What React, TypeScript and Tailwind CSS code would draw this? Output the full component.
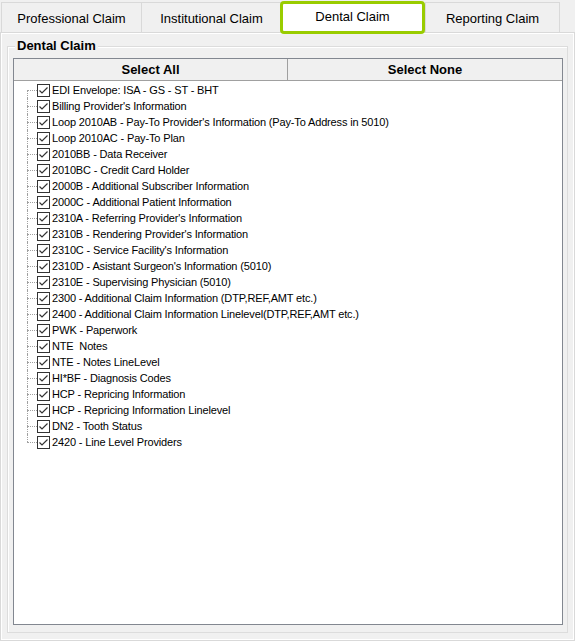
import React from 'react';

const tabs = [
  { label: 'Professional Claim', width: 'w-[140px]' },
  { label: 'Institutional Claim', width: 'w-[140px]' },
  { label: 'Dental Claim', width: 'w-[145px]', active: true },
  { label: 'Reporting Claim', width: 'w-[135px]' },
];

const items = [
  'EDI Envelope: ISA - GS - ST - BHT',
  "Billing Provider's Information",
  "Loop 2010AB - Pay-To Provider's Information (Pay-To Address in 5010)",
  'Loop 2010AC - Pay-To Plan',
  '2010BB - Data Receiver',
  '2010BC - Credit Card Holder',
  '2000B - Additional Subscriber Information',
  '2000C - Additional Patient Information',
  "2310A - Referring Provider's Information",
  "2310B - Rendering Provider's Information",
  "2310C - Service Facility's Information",
  "2310D - Asistant Surgeon's Information (5010)",
  '2310E - Supervising Physician (5010)',
  '2300 - Additional Claim Information (DTP,REF,AMT etc.)',
  '2400 - Additional Claim Information Linelevel(DTP,REF,AMT etc.)',
  'PWK - Paperwork',
  'NTE  Notes',
  'NTE - Notes LineLevel',
  'HI*BF - Diagnosis Codes',
  'HCP - Repricing Information',
  'HCP - Repricing Information Linelevel',
  'DN2 - Tooth Status',
  '2420 - Line Level Providers',
];

function CheckBox() {
  return (
    <svg width="13" height="13" viewBox="0 0 13 13" className="shrink-0">
      <rect x="0.5" y="0.5" width="12" height="12" fill="#fff" stroke="#333" />
      <path d="M2.5 6.5 L5 9 L10.5 3.5" fill="none" stroke="#333" strokeWidth="1.2" />
    </svg>
  );
}

function TreeRow({ text, first, last }: { text: string; first: boolean; last: boolean }) {
  return (
    <div className="flex h-[16px] items-center">
      {/* connector lines */}
      <div className="relative w-[10px] self-stretch">
        <div
          className={`absolute left-0 border-l border-dotted border-[#a0a0a0] ${
            first ? 'top-[8px] bottom-0' : last ? 'top-0 h-[8px]' : 'top-0 bottom-0'
          }`}
        />
        <div className="absolute left-0 top-[8px] w-full border-t border-dotted border-[#a0a0a0]" />
      </div>
      <CheckBox />
      <span className="ml-[2px] whitespace-pre text-[11px] leading-none tracking-[-0.15px] text-black">
        {text}
      </span>
    </div>
  );
}

export default function App() {
  return (
    <div className="h-[641px] w-[575px] overflow-hidden bg-[#f0f0f0] font-['Liberation_Sans',Arial,sans-serif] text-black">
      {/* Tabs */}
      <div className="flex h-[32px] items-end pl-[1px]">
        {tabs.map((t) =>
          t.active ? (
            <div
              key={t.label}
              className={`relative z-10 -mb-[2px] -ml-[1px] flex h-[33px] ${t.width} items-start justify-center rounded-[4px] border-[3px] border-[#99cc00] bg-white pt-[3px] text-[13px]`}
            >
              {t.label}
            </div>
          ) : (
            <div
              key={t.label}
              className={`flex h-[30px] ${t.width} items-center justify-center border-l border-t border-[#d9d9d9] bg-[#f0f0f0] pt-[2px] text-[13px] last:border-r`}
            >
              {t.label}
            </div>
          )
        )}
      </div>

      {/* Panel */}
      <div className="h-[609px] w-[575px] border border-[#d9d9d9] bg-[#f0f0f0] pl-[6px] pt-[13px] shadow-[inset_1px_1px_0_#fff,inset_-1px_-1px_0_#fff]">
        {/* Group box */}
        <div className="relative h-[587px] w-[561px] border border-[#dcdcdc] shadow-[inset_1px_1px_0_#fff]">
          <span className="absolute -top-[9px] left-[7px] bg-[#f0f0f0] px-[2px] text-[13px] font-bold leading-[16px]">
            Dental Claim
          </span>
          <div className="ml-[5px] mt-[11px] flex h-[567px] w-[550px] flex-col border border-[#828790] bg-white">
            <div className="flex h-[22px] shrink-0 border-b border-[#a0a0a0] bg-[#f0f0f0] text-[13px] font-bold">
              <div className="flex w-[274px] items-center justify-center border-r border-[#a0a0a0]">Select All</div>
              <div className="flex flex-1 items-center justify-center">Select None</div>
            </div>
            <div className="pl-[13px] pt-[1px]">
              {items.map((it, i) => (
                <TreeRow key={it} text={it} first={i === 0} last={i === items.length - 1} />
              ))}
            </div>
          </div>
        </div>
      </div>
    </div>
  );
}
